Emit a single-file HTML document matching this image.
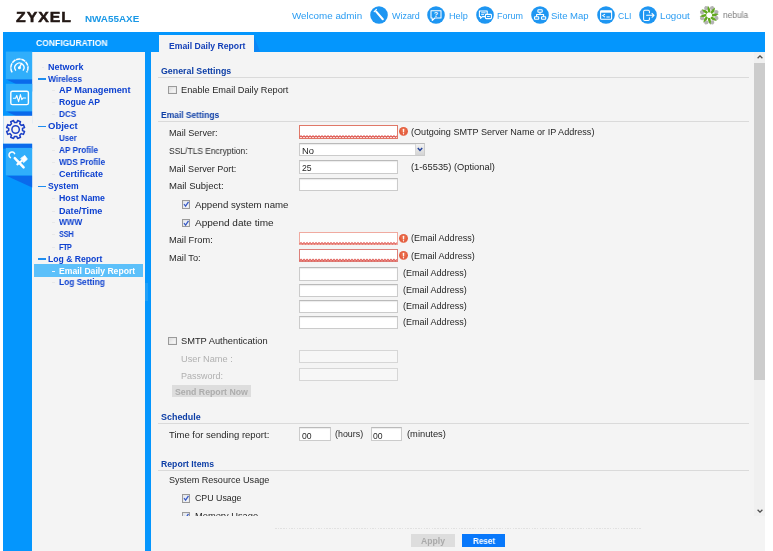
<!DOCTYPE html>
<html lang="en">
<head>
<meta charset="utf-8">
<title>ZYXEL NWA55AXE - Email Daily Report</title>
<style>
html,body{margin:0;padding:0;background:#fff;}
body{width:773px;height:551px;overflow:hidden;position:relative;font-family:"Liberation Sans",sans-serif;}
.a{position:absolute;}
.t{position:absolute;display:block;will-change:transform;transform-origin:0 50%;white-space:pre;line-height:16px;height:16px;font-family:"Liberation Sans",sans-serif;}
.bluebg{left:3px;top:32px;width:762px;height:519px;background:#0496fd;}
.navp{left:32.2px;top:51.6px;width:112.8px;height:499.4px;background:#f4f4f4;}
.mainp{left:151.3px;top:51.6px;width:613.7px;height:499.4px;background:#f4f4f4;}
.tab{left:159px;top:35.4px;width:94.9px;height:16.6px;background:#f4f4f4;}
.tabsh{left:253.9px;top:36.5px;width:6.2px;height:15.2px;background:#0b86f4;clip-path:polygon(0 0,100% 100%,0 100%);}
.hl{left:34px;top:264.4px;width:109px;height:12.4px;background:#5cc0fa;}
.dash{position:absolute;width:8px;height:1.6px;background:#1e8ef0;}
.ldash{position:absolute;width:2.5px;height:1px;background:#e8e8e8;}
.line{position:absolute;left:158px;width:591px;height:1px;background:#dadada;}
.in{position:absolute;box-sizing:border-box;background:#fff;border:1px solid #cbcbcb;border-top-color:#bababa;box-shadow:inset 0 1px 1px #ececec;}
.err{border:1px solid #e58478;box-shadow:none;}

.dis{background:#f7f7f7;border-color:#d6d6d6;box-shadow:none;}
.cb{position:absolute;box-sizing:border-box;width:8.4px;height:8.4px;border:1px solid #9a9a9a;background:linear-gradient(135deg,#d6d6d6 0%,#ececec 45%,#fbfbfb 100%);box-shadow:inset 0 0 0 .6px #e6e6e6;}
.cb.on{background:linear-gradient(135deg,#dfe4ee 0%,#eef1f8 50%,#fbfcfe 100%);}
.cb svg{position:absolute;left:-1px;top:-1px;width:8.4px;height:8.4px;}
.ei{position:absolute;width:9px;height:9px;}
.ic{position:absolute;width:17px;height:17px;}
.btn{position:absolute;box-sizing:border-box;}
</style>
</head>
<body>
<div class="a bluebg"></div>
<div class="a navp"></div>
<div class="a mainp"></div>
<div class="a tab"></div>
<div class="a tabsh"></div>
<div class="a hl"></div>
<svg class="a" style="left:0;top:0;width:40px;height:200px" viewBox="0 0 40 200"><polygon points="5.8,79.3 32.2,79.3 32.2,91.5" fill="#0a6aeb"/><polygon points="5.8,111.3 32.2,111.3 32.2,123.5" fill="#0a6aeb"/><rect x="3.2" y="143.6" width="29" height="5" fill="#0a6aeb"/><polygon points="5.8,175.4 32.2,175.4 32.2,187.6" fill="#0a6aeb"/><rect x="5.8" y="51.6" width="26.4" height="27.7" fill="#30aefb"/><rect x="5.8" y="83.8" width="26.4" height="27.5" fill="#30aefb"/><rect x="3.2" y="115.8" width="29.5" height="27.8" fill="#f4f4f4"/><rect x="5.8" y="147.9" width="26.4" height="27.5" fill="#30aefb"/><g fill="none" stroke="#fff" stroke-width="1.5" stroke-linecap="round"><path d="M12.2 72.4 A8.6 8.6 0 1 1 26.6 72.4" stroke-dasharray="4.4 0.6" stroke-linecap="butt"/><path d="M15.6 70.2 A4.6 4.6 0 1 1 23.2 70.2" stroke-width="1.3"/><path d="M19.4 67.6 L21.6 63.4" stroke-width="1.3"/></g><circle cx="19.4" cy="67.8" r="1.5" fill="#fff"/><g fill="none" stroke="#fff" stroke-linejoin="round" stroke-linecap="round"><rect x="10.8" y="91.2" width="17.6" height="13.4" rx="1.6" stroke-width="1.4"/><path d="M13.4 98.2 L15.6 98.2 L16.8 95.6 L18.6 101.6 L20.4 94.6 L21.8 99.6 L23 98 L25.6 98" stroke-width="1.1"/></g><path d="M16.70 122.59 L17.63 120.53 L20.51 121.72 L19.71 123.83 L21.27 125.39 L23.38 124.59 L24.57 127.47 L22.51 128.40 L22.51 130.60 L24.57 131.53 L23.38 134.41 L21.27 133.61 L19.71 135.17 L20.51 137.28 L17.63 138.47 L16.70 136.41 L14.50 136.41 L13.57 138.47 L10.69 137.28 L11.49 135.17 L9.93 133.61 L7.82 134.41 L6.63 131.53 L8.69 130.60 L8.69 128.40 L6.63 127.47 L7.82 124.59 L9.93 125.39 L11.49 123.83 L10.69 121.72 L13.57 120.53 L14.50 122.59 Z" fill="none" stroke="#1b3fc6" stroke-width="1.5" stroke-linejoin="round"/><circle cx="15.6" cy="129.5" r="3.7" fill="none" stroke="#1b3fc6" stroke-width="1.5"/><g fill="none" stroke="#fff" stroke-linecap="round"><path d="M14.8 158.2 L23.6 167.4" stroke-width="2.5"/><path d="M14.6 153.6 A3 3 0 1 0 10.4 157.6" stroke-width="1.5"/><path d="M21 158.2 L24.8 155.4 L27.4 159.2 L23.8 162.4 Z" fill="#fff" stroke-width="0.8" stroke-linejoin="round"/><path d="M21.6 161 L17.4 164.4" stroke-width="2.2"/></g></svg>
<div class="a" style="left:145.2px;top:283px;width:2.6px;height:18px;background:#1fa0f9"></div>
<div class="ldash" style="left:41.5px;top:67.4px"></div>
<div class="dash" style="left:37.5px;top:78.3px"></div>
<div class="ldash" style="left:52px;top:90.2px"></div>
<div class="ldash" style="left:52px;top:102.1px"></div>
<div class="ldash" style="left:52px;top:114.4px"></div>
<div class="dash" style="left:37.5px;top:125.8px"></div>
<div class="ldash" style="left:52px;top:138.1px"></div>
<div class="ldash" style="left:52px;top:150.1px"></div>
<div class="ldash" style="left:52px;top:162.1px"></div>
<div class="ldash" style="left:52px;top:174.4px"></div>
<div class="dash" style="left:37.5px;top:185.9px"></div>
<div class="ldash" style="left:52px;top:198.1px"></div>
<div class="ldash" style="left:52px;top:210.5px"></div>
<div class="ldash" style="left:52px;top:222.2px"></div>
<div class="ldash" style="left:52px;top:234.4px"></div>
<div class="ldash" style="left:52px;top:246.6px"></div>
<div class="dash" style="left:37.5px;top:258.3px"></div>
<div class="ldash" style="left:52px;top:270.5px;background:#e8f4ff"></div>
<div class="ldash" style="left:52px;top:282.3px"></div>
<div class="line" style="top:77px"></div>
<div class="line" style="top:121.3px"></div>
<div class="line" style="top:423px"></div>
<div class="line" style="top:470.3px"></div>
<div class="cb " style="left:168.2px;top:85.7px"></div>
<div class="in err" style="left:299.1px;top:125.2px;width:98.6px;height:13.6px;border-color:#e07868"><svg style="position:absolute;left:-1px;top:-1px;width:98.6px;height:13.6px" viewBox="0 0 98.6 13.6"><polyline points="0.50,12.40 2.00,10.90 3.50,12.40 5.00,10.90 6.50,12.40 8.00,10.90 9.50,12.40 11.00,10.90 12.50,12.40 14.00,10.90 15.50,12.40 17.00,10.90 18.50,12.40 20.00,10.90 21.50,12.40 23.00,10.90 24.50,12.40 26.00,10.90 27.50,12.40 29.00,10.90 30.50,12.40 32.00,10.90 33.50,12.40 35.00,10.90 36.50,12.40 38.00,10.90 39.50,12.40 41.00,10.90 42.50,12.40 44.00,10.90 45.50,12.40 47.00,10.90 48.50,12.40 50.00,10.90 51.50,12.40 53.00,10.90 54.50,12.40 56.00,10.90 57.50,12.40 59.00,10.90 60.50,12.40 62.00,10.90 63.50,12.40 65.00,10.90 66.50,12.40 68.00,10.90 69.50,12.40 71.00,10.90 72.50,12.40 74.00,10.90 75.50,12.40 77.00,10.90 78.50,12.40 80.00,10.90 81.50,12.40 83.00,10.90 84.50,12.40 86.00,10.90 87.50,12.40 89.00,10.90 90.50,12.40 92.00,10.90 93.50,12.40 95.00,10.90 96.50,12.40 98.00,10.90" fill="none" stroke="#e0605a" stroke-width="1.25"/></svg></div>
<svg class="ei" style="left:399.3px;top:127.1px" viewBox="0 0 10 10"><defs><radialGradient id="eg" cx="50%" cy="40%" r="60%"><stop offset="0" stop-color="#f0805a"/><stop offset="0.75" stop-color="#e2583a"/><stop offset="1" stop-color="#ef9a84"/></radialGradient></defs><circle cx="5" cy="5" r="5" fill="url(#eg)"/><rect x="4.3" y="1.9" width="1.4" height="4.1" rx=".6" fill="#fff" opacity=".92"/><rect x="4.3" y="6.8" width="1.4" height="1.4" rx=".5" fill="#fff" opacity=".92"/></svg>
<div class="in" style="left:299.1px;top:143.3px;width:126.2px;height:13.2px"></div>
<div class="a" style="left:414.8px;top:144.3px;width:9.6px;height:11.2px;background:linear-gradient(#f2f2f2,#d4d4d4);border-left:1px solid #d8d8d8;box-sizing:border-box"></div>
<svg class="a" style="left:416.6px;top:147.2px;width:6px;height:5px" viewBox="0 0 6 5"><path d="M0.8 1 L3 3.4 L5.2 1" fill="none" stroke="#24439a" stroke-width="1.5"/></svg>
<div class="in " style="left:299.1px;top:160.4px;width:98.6px;height:13.4px"></div>
<div class="in " style="left:299.1px;top:177.6px;width:98.6px;height:13.4px"></div>
<div class="cb on" style="left:182.1px;top:200.4px"><svg viewBox="0 0 8.4 8.4"><path d="M2 4.2 L3.6 6.1 L6.5 1.9" fill="none" stroke="#3b5cc4" stroke-width="1.3"/></svg></div>
<div class="cb on" style="left:182.1px;top:218.6px"><svg viewBox="0 0 8.4 8.4"><path d="M2 4.2 L3.6 6.1 L6.5 1.9" fill="none" stroke="#3b5cc4" stroke-width="1.3"/></svg></div>
<div class="in err" style="left:299.1px;top:231.9px;width:98.6px;height:13.3px;border-color:#f0aaa0"><svg style="position:absolute;left:-1px;top:-1px;width:98.6px;height:13.3px" viewBox="0 0 98.6 13.3"><polyline points="0.50,12.10 2.00,10.60 3.50,12.10 5.00,10.60 6.50,12.10 8.00,10.60 9.50,12.10 11.00,10.60 12.50,12.10 14.00,10.60 15.50,12.10 17.00,10.60 18.50,12.10 20.00,10.60 21.50,12.10 23.00,10.60 24.50,12.10 26.00,10.60 27.50,12.10 29.00,10.60 30.50,12.10 32.00,10.60 33.50,12.10 35.00,10.60 36.50,12.10 38.00,10.60 39.50,12.10 41.00,10.60 42.50,12.10 44.00,10.60 45.50,12.10 47.00,10.60 48.50,12.10 50.00,10.60 51.50,12.10 53.00,10.60 54.50,12.10 56.00,10.60 57.50,12.10 59.00,10.60 60.50,12.10 62.00,10.60 63.50,12.10 65.00,10.60 66.50,12.10 68.00,10.60 69.50,12.10 71.00,10.60 72.50,12.10 74.00,10.60 75.50,12.10 77.00,10.60 78.50,12.10 80.00,10.60 81.50,12.10 83.00,10.60 84.50,12.10 86.00,10.60 87.50,12.10 89.00,10.60 90.50,12.10 92.00,10.60 93.50,12.10 95.00,10.60 96.50,12.10 98.00,10.60" fill="none" stroke="#e4706a" stroke-width="1.25"/></svg></div>
<svg class="ei" style="left:399.3px;top:233.70000000000002px" viewBox="0 0 10 10"><defs><radialGradient id="eg" cx="50%" cy="40%" r="60%"><stop offset="0" stop-color="#f0805a"/><stop offset="0.75" stop-color="#e2583a"/><stop offset="1" stop-color="#ef9a84"/></radialGradient></defs><circle cx="5" cy="5" r="5" fill="url(#eg)"/><rect x="4.3" y="1.9" width="1.4" height="4.1" rx=".6" fill="#fff" opacity=".92"/><rect x="4.3" y="6.8" width="1.4" height="1.4" rx=".5" fill="#fff" opacity=".92"/></svg>
<div class="in err" style="left:299.1px;top:249.2px;width:98.6px;height:13.2px;border-color:#dc807a"><svg style="position:absolute;left:-1px;top:-1px;width:98.6px;height:13.2px" viewBox="0 0 98.6 13.2"><polyline points="0.50,12.00 2.00,10.50 3.50,12.00 5.00,10.50 6.50,12.00 8.00,10.50 9.50,12.00 11.00,10.50 12.50,12.00 14.00,10.50 15.50,12.00 17.00,10.50 18.50,12.00 20.00,10.50 21.50,12.00 23.00,10.50 24.50,12.00 26.00,10.50 27.50,12.00 29.00,10.50 30.50,12.00 32.00,10.50 33.50,12.00 35.00,10.50 36.50,12.00 38.00,10.50 39.50,12.00 41.00,10.50 42.50,12.00 44.00,10.50 45.50,12.00 47.00,10.50 48.50,12.00 50.00,10.50 51.50,12.00 53.00,10.50 54.50,12.00 56.00,10.50 57.50,12.00 59.00,10.50 60.50,12.00 62.00,10.50 63.50,12.00 65.00,10.50 66.50,12.00 68.00,10.50 69.50,12.00 71.00,10.50 72.50,12.00 74.00,10.50 75.50,12.00 77.00,10.50 78.50,12.00 80.00,10.50 81.50,12.00 83.00,10.50 84.50,12.00 86.00,10.50 87.50,12.00 89.00,10.50 90.50,12.00 92.00,10.50 93.50,12.00 95.00,10.50 96.50,12.00 98.00,10.50" fill="none" stroke="#e0605a" stroke-width="1.25"/></svg></div>
<svg class="ei" style="left:399.3px;top:251.0px" viewBox="0 0 10 10"><defs><radialGradient id="eg" cx="50%" cy="40%" r="60%"><stop offset="0" stop-color="#f0805a"/><stop offset="0.75" stop-color="#e2583a"/><stop offset="1" stop-color="#ef9a84"/></radialGradient></defs><circle cx="5" cy="5" r="5" fill="url(#eg)"/><rect x="4.3" y="1.9" width="1.4" height="4.1" rx=".6" fill="#fff" opacity=".92"/><rect x="4.3" y="6.8" width="1.4" height="1.4" rx=".5" fill="#fff" opacity=".92"/></svg>
<div class="in " style="left:299.1px;top:267.3px;width:98.6px;height:13.3px"></div>
<div class="in " style="left:299.1px;top:283.5px;width:98.6px;height:13.3px"></div>
<div class="in " style="left:299.1px;top:299.8px;width:98.6px;height:13.2px"></div>
<div class="in " style="left:299.1px;top:316.1px;width:98.6px;height:13.2px"></div>
<div class="cb " style="left:168.2px;top:337px"></div>
<div class="in dis" style="left:299.1px;top:350.3px;width:98.6px;height:13.2px"></div>
<div class="in dis" style="left:299.1px;top:368px;width:98.6px;height:13.2px"></div>
<div class="btn" style="left:172.1px;top:385.3px;width:78.9px;height:12.2px;background:#dddddd"></div>
<div class="in " style="left:299.1px;top:427.3px;width:31.7px;height:13.3px"></div>
<div class="in " style="left:370.5px;top:427.3px;width:31.3px;height:13.3px"></div>
<div class="cb on" style="left:182.1px;top:494.2px"><svg viewBox="0 0 8.4 8.4"><path d="M2 4.2 L3.6 6.1 L6.5 1.9" fill="none" stroke="#3b5cc4" stroke-width="1.3"/></svg></div>
<div class="cb on" style="left:182.1px;top:512.3px"><svg viewBox="0 0 8.4 8.4"><path d="M2 4.2 L3.6 6.1 L6.5 1.9" fill="none" stroke="#3b5cc4" stroke-width="1.3"/></svg></div>
<div class="a" style="left:754px;top:52px;width:11px;height:465px;background:#f0f0f0"></div>
<div class="a" style="left:754.1px;top:62.6px;width:10.9px;height:317.4px;background:#cccccc"></div>
<svg class="a" style="left:756.5px;top:54.5px;width:6px;height:4px" viewBox="0 0 6 4"><path d="M0.6 3.3 L3 0.9 L5.4 3.3" fill="none" stroke="#505050" stroke-width="1.3"/></svg>
<svg class="a" style="left:756.5px;top:508.5px;width:6px;height:4px" viewBox="0 0 6 4"><path d="M0.6 0.7 L3 3.1 L5.4 0.7" fill="none" stroke="#505050" stroke-width="1.3"/></svg>
<div class="a" style="left:151.3px;top:515.9px;width:613.7px;height:35.1px;background:#f4f4f4;z-index:5"></div>
<div class="a" style="left:274.5px;top:528.4px;width:366.5px;height:1px;background:repeating-linear-gradient(90deg,#e1e1e1 0 1.5px,transparent 1.5px 2.7px);z-index:6"></div>
<div class="btn" style="left:411.2px;top:534.3px;width:43.6px;height:12.9px;background:#dddddd;z-index:6"></div>
<div class="btn" style="left:462.1px;top:534.3px;width:43.2px;height:12.9px;background:#0878fb;z-index:6"></div>
<svg class="a" style="left:370.2px;top:5.7px;width:18px;height:18px" viewBox="-9 -9 18 18"><circle cx="0" cy="0" r="8.8" fill="#1e96f2"/><g stroke="#fff" stroke-linecap="round" fill="none"><path d="M-2.8 -3.4 L3.8 4.2" stroke-width="2.1"/><path d="M-4.8 -3.4 L-2.6 -5.6" stroke-width="1.2"/></g></svg>
<svg class="a" style="left:427.4px;top:5.7px;width:18px;height:18px" viewBox="-9 -9 18 18"><circle cx="0" cy="0" r="8.8" fill="#1e96f2"/><path d="M-5 -4.3 H5 V3 H-1.2 L-3.8 5.5 V3 H-5 Z" fill="none" stroke="#fff" stroke-width="1.05" stroke-linejoin="round"/><text x="0" y="1.9" font-family="Liberation Sans, sans-serif" font-size="7.2" font-weight="bold" fill="#fff" text-anchor="middle">?</text></svg>
<svg class="a" style="left:475.7px;top:5.7px;width:18px;height:18px" viewBox="-9 -9 18 18"><circle cx="0" cy="0" r="8.8" fill="#1e96f2"/><g fill="none" stroke="#fff" stroke-width="1.1" stroke-linejoin="round"><path d="M-5.6 -4 H2.2 V1.6 H-2.6 L-4.4 3.4 V1.6 H-5.6 Z"/><path d="M-3.8 -2.2 H0.6 M-3.8 -0.4 H-1" stroke-width=".9"/><rect x="0.4" y="-0.6" width="6" height="4.2" rx=".8" fill="#1e96f2"/><path d="M2 1.5 H4.8" stroke-width=".9"/></g></svg>
<svg class="a" style="left:530.7px;top:5.7px;width:18px;height:18px" viewBox="-9 -9 18 18"><circle cx="0" cy="0" r="8.8" fill="#1e96f2"/><g fill="none" stroke="#fff" stroke-width="1.1" stroke-linejoin="round"><rect x="-2.1" y="-5.3" width="4.3" height="2.6" rx=".5"/><rect x="-5.5" y="1.7" width="4.2" height="2.6" rx=".5"/><rect x="1.5" y="1.7" width="4.2" height="2.6" rx=".5"/><path d="M0 -2.7 V-0.5 M-3.4 1.7 V-0.5 H3.6 V1.7"/></g></svg>
<svg class="a" style="left:597.3px;top:5.7px;width:18px;height:18px" viewBox="-9 -9 18 18"><circle cx="0" cy="0" r="8.8" fill="#1e96f2"/><rect x="-5.4" y="-4.2" width="11" height="8.4" rx=".8" fill="none" stroke="#fff" stroke-width="1.1"/><rect x="-5.4" y="-4.2" width="11" height="1.9" fill="#fff"/><path d="M-1 -0.9 L-3.2 0.6 L-1 2.1 M0.4 2 H3.8" fill="none" stroke="#fff" stroke-width="1.1"/></svg>
<svg class="a" style="left:639.1px;top:5.7px;width:18px;height:18px" viewBox="-9 -9 18 18"><circle cx="0" cy="0" r="8.8" fill="#1e96f2"/><g fill="none" stroke="#fff" stroke-width="1.05" stroke-linejoin="round" stroke-linecap="round"><path d="M1.4 -2.2 V-3.6 Q1.4 -4.7 0.3 -4.7 H-3.3 Q-4.4 -4.7 -4.4 -3.6 V4.3 Q-4.4 5.4 -3.3 5.4 H0.3 Q1.4 5.4 1.4 4.3 V2.8"/><path d="M-1.4 0.3 H6 M4 -1.7 L6 0.3 L4 2.3"/></g></svg>
<svg class="a" style="left:698.7px;top:4.7px;width:20.4px;height:20.4px" viewBox="-10.2 -10.2 20.4 20.4"><g transform="rotate(22.5)"><path d="M0 -10 Q2.6 -9.2 2.3 -6.6 Q0 -4.6 -2.3 -6.6 Q-2.6 -9.2 0 -10 Z" fill="#b4b4b4"/></g><g transform="rotate(67.5)"><path d="M0 -10 Q2.6 -9.2 2.3 -6.6 Q0 -4.6 -2.3 -6.6 Q-2.6 -9.2 0 -10 Z" fill="#b4b4b4"/></g><g transform="rotate(112.5)"><path d="M0 -10 Q2.6 -9.2 2.3 -6.6 Q0 -4.6 -2.3 -6.6 Q-2.6 -9.2 0 -10 Z" fill="#b4b4b4"/></g><g transform="rotate(157.5)"><path d="M0 -10 Q2.6 -9.2 2.3 -6.6 Q0 -4.6 -2.3 -6.6 Q-2.6 -9.2 0 -10 Z" fill="#b4b4b4"/></g><g transform="rotate(202.5)"><path d="M0 -10 Q2.6 -9.2 2.3 -6.6 Q0 -4.6 -2.3 -6.6 Q-2.6 -9.2 0 -10 Z" fill="#b4b4b4"/></g><g transform="rotate(247.5)"><path d="M0 -10 Q2.6 -9.2 2.3 -6.6 Q0 -4.6 -2.3 -6.6 Q-2.6 -9.2 0 -10 Z" fill="#b4b4b4"/></g><g transform="rotate(292.5)"><path d="M0 -10 Q2.6 -9.2 2.3 -6.6 Q0 -4.6 -2.3 -6.6 Q-2.6 -9.2 0 -10 Z" fill="#b4b4b4"/></g><g transform="rotate(337.5)"><path d="M0 -10 Q2.6 -9.2 2.3 -6.6 Q0 -4.6 -2.3 -6.6 Q-2.6 -9.2 0 -10 Z" fill="#b4b4b4"/></g><g transform="rotate(-4)"><path d="M-0.6 -9.6 Q2.4 -5.4 1.2 -2.6 L-0.8 -2.8 Q-2 -5.6 -0.6 -9.6 Z" fill="#62a821"/></g><g transform="rotate(41)"><path d="M-0.6 -9.6 Q2.4 -5.4 1.2 -2.6 L-0.8 -2.8 Q-2 -5.6 -0.6 -9.6 Z" fill="#62a821"/></g><g transform="rotate(86)"><path d="M-0.6 -9.6 Q2.4 -5.4 1.2 -2.6 L-0.8 -2.8 Q-2 -5.6 -0.6 -9.6 Z" fill="#62a821"/></g><g transform="rotate(131)"><path d="M-0.6 -9.6 Q2.4 -5.4 1.2 -2.6 L-0.8 -2.8 Q-2 -5.6 -0.6 -9.6 Z" fill="#62a821"/></g><g transform="rotate(176)"><path d="M-0.6 -9.6 Q2.4 -5.4 1.2 -2.6 L-0.8 -2.8 Q-2 -5.6 -0.6 -9.6 Z" fill="#62a821"/></g><g transform="rotate(221)"><path d="M-0.6 -9.6 Q2.4 -5.4 1.2 -2.6 L-0.8 -2.8 Q-2 -5.6 -0.6 -9.6 Z" fill="#62a821"/></g><g transform="rotate(266)"><path d="M-0.6 -9.6 Q2.4 -5.4 1.2 -2.6 L-0.8 -2.8 Q-2 -5.6 -0.6 -9.6 Z" fill="#62a821"/></g><g transform="rotate(311)"><path d="M-0.6 -9.6 Q2.4 -5.4 1.2 -2.6 L-0.8 -2.8 Q-2 -5.6 -0.6 -9.6 Z" fill="#62a821"/></g><circle r="2.5" fill="#fff"/></svg>
<span class="t" style="left:15.5px;top:9.3px;font-size:14.4px;font-weight:bold;color:#231815;letter-spacing:0.89px;transform:scaleX(1.100);-webkit-text-stroke:0.5px #231815;">ZYXEL</span>
<span class="t" style="left:84.5px;top:11.0px;font-size:9.6px;font-weight:bold;color:#1a98e6;letter-spacing:0.00px;transform:scaleX(1.027);">NWA55AXE</span>
<span class="t" style="left:292.0px;top:7.6px;font-size:8.6px;font-weight:normal;color:#2a9cf2;letter-spacing:0.00px;transform:scaleX(1.141);">Welcome admin</span>
<span class="t" style="left:391.6px;top:7.6px;font-size:8.6px;font-weight:normal;color:#2a9cf2;letter-spacing:0.00px;transform:scaleX(1.039);">Wizard</span>
<span class="t" style="left:448.5px;top:7.6px;font-size:8.6px;font-weight:normal;color:#2a9cf2;letter-spacing:0.00px;transform:scaleX(1.063);">Help</span>
<span class="t" style="left:496.7px;top:7.6px;font-size:8.6px;font-weight:normal;color:#2a9cf2;letter-spacing:0.00px;transform:scaleX(1.043);">Forum</span>
<span class="t" style="left:551.4px;top:7.6px;font-size:8.6px;font-weight:normal;color:#2a9cf2;letter-spacing:0.00px;transform:scaleX(1.111);">Site Map</span>
<span class="t" style="left:618.2px;top:7.6px;font-size:8.6px;font-weight:normal;color:#2a9cf2;letter-spacing:0.00px;transform:scaleX(0.979);">CLI</span>
<span class="t" style="left:659.8px;top:7.6px;font-size:8.6px;font-weight:normal;color:#2a9cf2;letter-spacing:0.00px;transform:scaleX(1.133);">Logout</span>
<span class="t" style="left:723.0px;top:7.0px;font-size:8.6px;font-weight:normal;color:#7a7a7a;letter-spacing:0.00px;transform:scaleX(0.976);">nebula</span>
<span class="t" style="left:35.6px;top:34.7px;font-size:9px;font-weight:bold;color:#ffffff;letter-spacing:0.00px;transform:scaleX(0.951);">CONFIGURATION</span>
<span class="t" style="left:168.6px;top:38.0px;font-size:8.6px;font-weight:bold;color:#1440b8;letter-spacing:0.00px;transform:scaleX(1.006);">Email Daily Report</span>
<span class="t" style="left:48.4px;top:59.4px;font-size:8.6px;font-weight:bold;color:#0d41d0;letter-spacing:0.00px;transform:scaleX(1.044);">Network</span>
<span class="t" style="left:48.4px;top:70.8px;font-size:8.6px;font-weight:bold;color:#0d41d0;letter-spacing:0.00px;transform:scaleX(0.964);">Wireless</span>
<span class="t" style="left:59.0px;top:82.2px;font-size:8.6px;font-weight:bold;color:#0d41d0;letter-spacing:0.00px;transform:scaleX(1.073);">AP Management</span>
<span class="t" style="left:59.0px;top:94.1px;font-size:8.6px;font-weight:bold;color:#0d41d0;letter-spacing:0.00px;transform:scaleX(1.004);">Rogue AP</span>
<span class="t" style="left:59.0px;top:106.4px;font-size:8.6px;font-weight:bold;color:#0d41d0;letter-spacing:0.00px;transform:scaleX(0.947);">DCS</span>
<span class="t" style="left:48.4px;top:118.3px;font-size:8.6px;font-weight:bold;color:#0d41d0;letter-spacing:0.00px;transform:scaleX(1.107);">Object</span>
<span class="t" style="left:59.0px;top:130.1px;font-size:8.6px;font-weight:bold;color:#0d41d0;letter-spacing:0.00px;transform:scaleX(0.926);">User</span>
<span class="t" style="left:59.0px;top:142.1px;font-size:8.6px;font-weight:bold;color:#0d41d0;letter-spacing:0.00px;transform:scaleX(0.953);">AP Profile</span>
<span class="t" style="left:59.0px;top:154.1px;font-size:8.6px;font-weight:bold;color:#0d41d0;letter-spacing:0.00px;transform:scaleX(0.935);">WDS Profile</span>
<span class="t" style="left:59.0px;top:166.4px;font-size:8.6px;font-weight:bold;color:#0d41d0;letter-spacing:0.00px;transform:scaleX(1.044);">Certificate</span>
<span class="t" style="left:48.4px;top:178.4px;font-size:8.6px;font-weight:bold;color:#0d41d0;letter-spacing:0.00px;transform:scaleX(1.001);">System</span>
<span class="t" style="left:59.0px;top:190.1px;font-size:8.6px;font-weight:bold;color:#0d41d0;letter-spacing:0.00px;transform:scaleX(1.025);">Host Name</span>
<span class="t" style="left:59.0px;top:202.5px;font-size:8.6px;font-weight:bold;color:#0d41d0;letter-spacing:0.00px;transform:scaleX(1.058);">Date/Time</span>
<span class="t" style="left:59.0px;top:214.2px;font-size:8.6px;font-weight:bold;color:#0d41d0;letter-spacing:0.00px;transform:scaleX(0.953);">WWW</span>
<span class="t" style="left:59.0px;top:226.4px;font-size:8.6px;font-weight:bold;color:#0d41d0;letter-spacing:-0.20px;transform:scaleX(0.850);">SSH</span>
<span class="t" style="left:59.0px;top:238.6px;font-size:8.6px;font-weight:bold;color:#0d41d0;letter-spacing:-0.59px;transform:scaleX(0.850);">FTP</span>
<span class="t" style="left:48.4px;top:250.8px;font-size:8.6px;font-weight:bold;color:#0d41d0;letter-spacing:0.00px;transform:scaleX(0.996);">Log &amp; Report</span>
<span class="t" style="left:59.0px;top:262.5px;font-size:8.6px;font-weight:bold;color:#ffffff;letter-spacing:0.00px;transform:scaleX(1.003);">Email Daily Report</span>
<span class="t" style="left:59.0px;top:274.3px;font-size:8.6px;font-weight:bold;color:#0d41d0;letter-spacing:0.00px;transform:scaleX(0.969);">Log Setting</span>
<span class="t" style="left:161.2px;top:63.0px;font-size:8.6px;font-weight:bold;color:#0d3ea6;letter-spacing:0.00px;transform:scaleX(1.028);">General Settings</span>
<span class="t" style="left:181.3px;top:82.3px;font-size:8.6px;font-weight:normal;color:#272727;letter-spacing:0.00px;transform:scaleX(1.071);">Enable Email Daily Report</span>
<span class="t" style="left:161.2px;top:107.1px;font-size:8.6px;font-weight:bold;color:#0d3ea6;letter-spacing:0.00px;transform:scaleX(0.983);">Email Settings</span>
<span class="t" style="left:168.8px;top:125.0px;font-size:8.6px;font-weight:normal;color:#272727;letter-spacing:0.00px;transform:scaleX(1.060);">Mail Server:</span>
<span class="t" style="left:410.9px;top:123.6px;font-size:8.6px;font-weight:normal;color:#272727;letter-spacing:0.00px;transform:scaleX(1.057);">(Outgoing SMTP Server Name or IP Address)</span>
<span class="t" style="left:168.8px;top:143.0px;font-size:8.6px;font-weight:normal;color:#272727;letter-spacing:0.00px;transform:scaleX(0.985);">SSL/TLS Encryption:</span>
<span class="t" style="left:301.6px;top:143.2px;font-size:8.6px;font-weight:normal;color:#272727;letter-spacing:0.00px;transform:scaleX(1.091);">No</span>
<span class="t" style="left:168.8px;top:160.5px;font-size:8.6px;font-weight:normal;color:#272727;letter-spacing:0.00px;transform:scaleX(1.053);">Mail Server Port:</span>
<span class="t" style="left:301.6px;top:160.2px;font-size:8.6px;font-weight:normal;color:#272727;letter-spacing:0.00px;transform:scaleX(1.004);">25</span>
<span class="t" style="left:410.9px;top:159.3px;font-size:8.6px;font-weight:normal;color:#272727;letter-spacing:0.00px;transform:scaleX(1.083);">(1-65535) (Optional)</span>
<span class="t" style="left:168.8px;top:178.0px;font-size:8.6px;font-weight:normal;color:#272727;letter-spacing:0.00px;transform:scaleX(1.110);">Mail Subject:</span>
<span class="t" style="left:194.9px;top:197.0px;font-size:8.6px;font-weight:normal;color:#272727;letter-spacing:0.00px;transform:scaleX(1.124);">Append system name</span>
<span class="t" style="left:194.9px;top:215.0px;font-size:8.6px;font-weight:normal;color:#272727;letter-spacing:0.00px;transform:scaleX(1.167);">Append date time</span>
<span class="t" style="left:168.8px;top:231.6px;font-size:8.6px;font-weight:normal;color:#272727;letter-spacing:0.00px;transform:scaleX(1.077);">Mail From:</span>
<span class="t" style="left:410.9px;top:229.8px;font-size:8.6px;font-weight:normal;color:#272727;letter-spacing:0.00px;transform:scaleX(1.050);">(Email Address)</span>
<span class="t" style="left:168.8px;top:249.5px;font-size:8.6px;font-weight:normal;color:#272727;letter-spacing:0.00px;transform:scaleX(1.076);">Mail To:</span>
<span class="t" style="left:410.9px;top:248.2px;font-size:8.6px;font-weight:normal;color:#272727;letter-spacing:0.00px;transform:scaleX(1.050);">(Email Address)</span>
<span class="t" style="left:402.7px;top:265.2px;font-size:8.6px;font-weight:normal;color:#272727;letter-spacing:0.00px;transform:scaleX(1.050);">(Email Address)</span>
<span class="t" style="left:402.7px;top:281.5px;font-size:8.6px;font-weight:normal;color:#272727;letter-spacing:0.00px;transform:scaleX(1.050);">(Email Address)</span>
<span class="t" style="left:402.7px;top:297.8px;font-size:8.6px;font-weight:normal;color:#272727;letter-spacing:0.00px;transform:scaleX(1.050);">(Email Address)</span>
<span class="t" style="left:402.7px;top:314.2px;font-size:8.6px;font-weight:normal;color:#272727;letter-spacing:0.00px;transform:scaleX(1.050);">(Email Address)</span>
<span class="t" style="left:181.3px;top:333.1px;font-size:8.6px;font-weight:normal;color:#272727;letter-spacing:0.00px;transform:scaleX(1.081);">SMTP Authentication</span>
<span class="t" style="left:181.3px;top:350.8px;font-size:8.6px;font-weight:normal;color:#b0b0b0;letter-spacing:0.00px;transform:scaleX(1.072);">User Name :</span>
<span class="t" style="left:181.3px;top:368.0px;font-size:8.6px;font-weight:normal;color:#b0b0b0;letter-spacing:0.00px;transform:scaleX(1.049);">Password:</span>
<span class="t" style="left:175.3px;top:384.0px;font-size:8.6px;font-weight:bold;color:#adadad;letter-spacing:0.00px;transform:scaleX(1.018);">Send Report Now</span>
<span class="t" style="left:161.2px;top:408.9px;font-size:8.6px;font-weight:bold;color:#0d3ea6;letter-spacing:0.00px;transform:scaleX(1.039);">Schedule</span>
<span class="t" style="left:168.8px;top:427.3px;font-size:8.6px;font-weight:normal;color:#272727;letter-spacing:0.00px;transform:scaleX(1.103);">Time for sending report:</span>
<span class="t" style="left:302.0px;top:427.6px;font-size:8.6px;font-weight:normal;color:#272727;letter-spacing:0.00px;transform:scaleX(0.962);">00</span>
<span class="t" style="left:335.2px;top:426.0px;font-size:8.6px;font-weight:normal;color:#272727;letter-spacing:0.00px;transform:scaleX(1.032);">(hours)</span>
<span class="t" style="left:373.0px;top:427.6px;font-size:8.6px;font-weight:normal;color:#272727;letter-spacing:0.00px;transform:scaleX(0.962);">00</span>
<span class="t" style="left:406.6px;top:426.0px;font-size:8.6px;font-weight:normal;color:#272727;letter-spacing:0.00px;transform:scaleX(1.086);">(minutes)</span>
<span class="t" style="left:161.2px;top:455.9px;font-size:8.6px;font-weight:bold;color:#0d3ea6;letter-spacing:0.00px;transform:scaleX(1.009);">Report Items</span>
<span class="t" style="left:168.8px;top:471.6px;font-size:8.6px;font-weight:normal;color:#272727;letter-spacing:0.00px;transform:scaleX(1.055);">System Resource Usage</span>
<span class="t" style="left:194.9px;top:489.9px;font-size:8.6px;font-weight:normal;color:#272727;letter-spacing:0.00px;transform:scaleX(1.025);">CPU Usage</span>
<span class="t" style="left:194.9px;top:508.0px;font-size:8.6px;font-weight:normal;color:#272727;letter-spacing:0.00px;transform:scaleX(1.083);">Memory Usage</span>
<span class="t" style="left:421.0px;top:533.0px;font-size:8.6px;font-weight:bold;color:#aaaaaa;letter-spacing:0.00px;transform:scaleX(1.005);z-index:7;">Apply</span>
<span class="t" style="left:472.7px;top:533.0px;font-size:8.6px;font-weight:bold;color:#ffffff;letter-spacing:0.00px;transform:scaleX(0.944);z-index:7;">Reset</span>
</body>
</html>
